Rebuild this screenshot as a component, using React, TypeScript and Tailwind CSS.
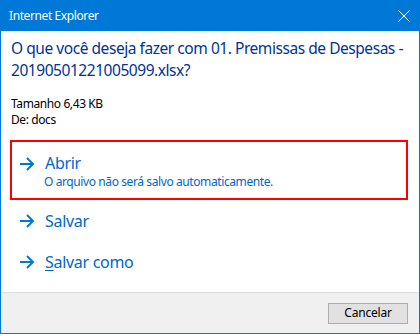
import React from "react";

const Arrow = () => (
  <svg width="16" height="14" viewBox="0 0 16 14" className="shrink-0">
    <path d="M1 7 H14" stroke="#0078d7" strokeWidth="2" fill="none" />
    <path d="M8 1 L14 7 L8 13" stroke="#0078d7" strokeWidth="2" fill="none" />
  </svg>
);

export default function App() {
  const font = { fontFamily: '"Noto Sans", "Open Sans", sans-serif' };
  return (
    <div
      className="w-[420px] h-[334px] flex flex-col border-x border-b border-[#0078d7] bg-white"
      style={font}
    >
      <div className="h-[31px] shrink-0 bg-[#0078d7] flex items-center justify-between pl-[8px] pr-[9px]">
        <span className="text-white text-[12px] tracking-[-0.4px]">Internet Explorer</span>
        <svg width="12" height="12" viewBox="0 0 12 12">
          <path d="M0.5 0.5 L11.5 11.5 M11.5 0.5 L0.5 11.5" stroke="white" strokeWidth="1" />
        </svg>
      </div>
      <div className="h-[261px] shrink-0 pl-[9px] pr-[11px] pt-[6px]">
        <div className="text-[15.5px] leading-[22px] text-[#003399] pl-[1px] whitespace-nowrap tracking-[-0.45px]">
          O que você deseja fazer com 01. Premissas de Despesas -
          <br />
          20190501221005099.xlsx?
        </div>
        <div className="mt-[15px] text-[12px] leading-[16px] text-black pl-[1px] tracking-[-0.4px]">
          <div>Tamanho 6,43 KB</div>
          <div>De: docs</div>
        </div>
        <div className="mt-[12px] h-[60px] border-2 border-[#ff0000] flex flex-col justify-center pl-[7px] pt-[3px]">
          <div className="flex items-center gap-[10px]">
            <Arrow />
            <span className="text-[16px] leading-[21px] text-[#0066cc] tracking-[-0.3px]">Abrir</span>
          </div>
          <div className="pl-[25px] text-[12px] leading-[16px] text-[#0066cc] tracking-[-0.4px]">
            O arquivo não será salvo automaticamente.
          </div>
        </div>
        <div className="h-[42px] flex items-center gap-[10px] pl-[9px]">
          <Arrow />
          <span className="text-[16px] leading-[20px] text-[#0066cc] tracking-[-0.3px]">Salvar</span>
        </div>
        <div className="h-[40px] flex items-center gap-[10px] pl-[9px]">
          <Arrow />
          <span className="text-[16px] leading-[20px] text-[#0066cc] tracking-[-0.3px]">
            <span className="underline underline-offset-2">S</span>alvar como
          </span>
        </div>
      </div>
      <div className="flex-1 border-t border-[#dfdfdf] bg-[#f0f0f0] flex items-center justify-end pr-[11px]">
        <button className="w-[80px] h-[21px] border border-[#adadad] bg-[#e1e1e1] text-[12px] text-black leading-none flex items-center justify-center tracking-[-0.2px]">
          Cancelar
        </button>
      </div>
    </div>
  );
}
